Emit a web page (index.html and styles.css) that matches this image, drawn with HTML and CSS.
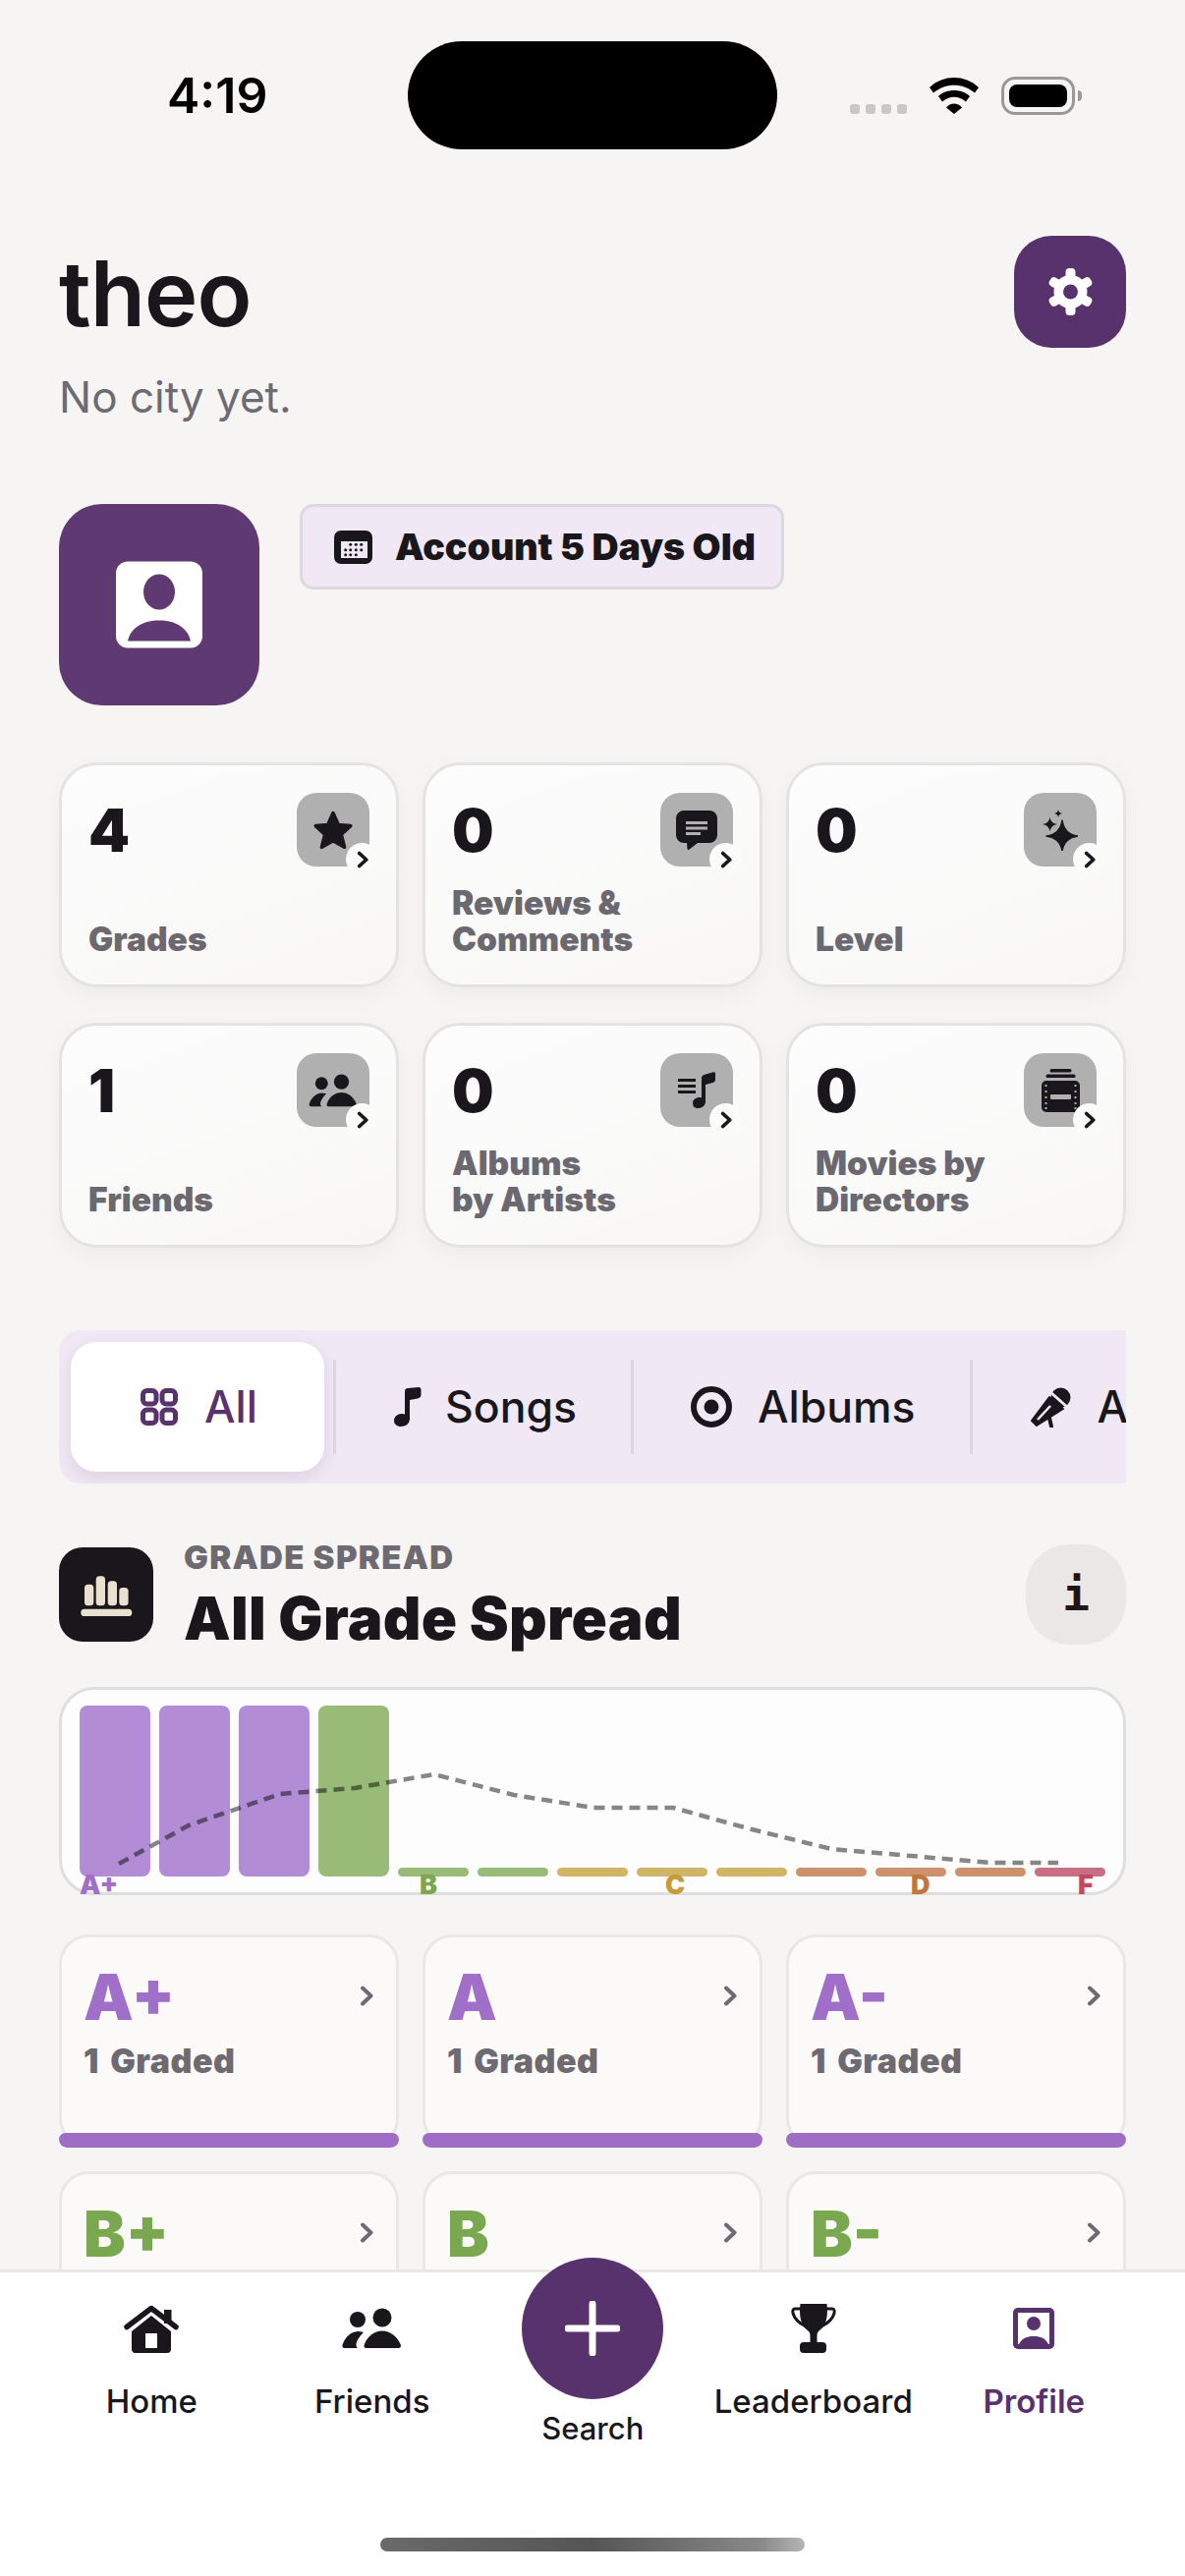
FILE: index.html
```html
<!DOCTYPE html>
<html lang="en">
<head>
    <meta charset="UTF-8">
    <title>Profile</title>
    <link rel="stylesheet" href="styles.css">
</head>
<body>
    <div class="content">
        <div class="status">
            <div class="time">4:19</div>
            <div class="island"></div>
            <div class="dots"><i></i><i></i><i></i><i></i></div>
            <svg class="wifi" viewBox="0 0 50 37">
                <path d="M0 10 C14 -3.300 36 -3.300 50 10 L46 15.500 C34 5 16 5 4 15.500Z"/>
                <path d="M9 19 C17 11 33 11 41 19 L37 24.500 C30 18 20 18 13 24.500Z"/>
                <path d="M17 30.500 C21 25 29 25 33 30.500 L25 37Z"/>
            </svg>
            <div class="battery"><div class="battery-fill"></div></div>
            <div class="battery-nub"></div>
        </div>

        <div class="head">
            <div class="head-text">
                <h1 class="name">theo</h1>
                <div class="city">No city yet.</div>
            </div>
            <div class="settings">
                <svg viewBox="0 0 48 48" width="49" height="48">
                    <g fill="#fff">
                        <circle cx="24" cy="24" r="17"/>
                        <rect x="19" y="0" width="10" height="12" rx="4"/>
                        <rect x="19" y="0" width="10" height="12" rx="4" transform="rotate(60 24 24)"/>
                        <rect x="19" y="0" width="10" height="12" rx="4" transform="rotate(120 24 24)"/>
                        <rect x="19" y="0" width="10" height="12" rx="4" transform="rotate(180 24 24)"/>
                        <rect x="19" y="0" width="10" height="12" rx="4" transform="rotate(240 24 24)"/>
                        <rect x="19" y="0" width="10" height="12" rx="4" transform="rotate(300 24 24)"/>
                    </g>
                    <circle cx="24" cy="24" r="7.500" fill="#58326d"/>
                </svg>
            </div>
        </div>

        <div class="account">
            <div class="avatar">
                <svg viewBox="0 0 88 88" width="88" height="89">
                    <rect width="88" height="88" rx="12" fill="#fff"/>
                    <ellipse cx="44" cy="31" rx="16" ry="18" fill="#5f3a72"/>
                    <path d="M12 81 C15 67 28 60 44 60 S73 67 76 81Z" fill="#5f3a72"/>
                </svg>
            </div>
            <div class="badge">
                <svg viewBox="0 0 39 34" width="39" height="34">
                    <rect width="39" height="34" rx="7" fill="#19171c"/>
                    <rect x="7" y="11" width="27" height="17" fill="#f0e8f4"/>
                    <g fill="#19171c">
                        <circle cx="16.700" cy="14.300" r="1.500"/><circle cx="22.300" cy="14.300" r="1.500"/><circle cx="27.700" cy="14.300" r="1.500"/>
                        <circle cx="11.700" cy="19.700" r="1.500"/><circle cx="16.700" cy="19.700" r="1.500"/><circle cx="22.300" cy="19.700" r="1.500"/><circle cx="27.700" cy="19.700" r="1.500"/>
                        <circle cx="11.700" cy="24.700" r="1.500"/><circle cx="16.700" cy="24.700" r="1.500"/><circle cx="22.300" cy="24.700" r="1.500"/>
                    </g>
                </svg>
                <span>Account 5 Days Old</span>
            </div>
        </div>

        <div class="stats">
            <div class="stat">
                <div class="stat-top">
                    <div class="stat-num">4</div>
                    <div class="stat-icon">
                        <svg viewBox="0 0 44 44" width="44" height="42"><polygon points="22,4 27.500,16.500 40.500,17.500 30.500,26.500 34,40 22,33 10,40 13.500,26.500 3.500,17.500 16.500,16.500" fill="#19171c" stroke="#19171c" stroke-width="4" stroke-linejoin="round"/></svg>
                        <div class="stat-go"><svg viewBox="0 0 12 16" width="13" height="18"><path d="M2.500 2 L9 8 L2.500 14" fill="none" stroke="#19171c" stroke-width="3.400" stroke-linecap="round" stroke-linejoin="round"/></svg></div>
                    </div>
                </div>
                <div class="stat-label">Grades</div>
            </div>
            <div class="stat">
                <div class="stat-top">
                    <div class="stat-num">0</div>
                    <div class="stat-icon">
                        <svg viewBox="0 0 42 40" width="42" height="40">
                            <path d="M8 0 H34 A8 8 0 0 1 42 8 V25 A8 8 0 0 1 34 33 H22 L13 40 C12 40 11.500 39.500 11.500 38.500 L11 33 H8 A8 8 0 0 1 0 25 V8 A8 8 0 0 1 8 0Z" fill="#19171c"/>
                            <g fill="#b1b0b1"><rect x="10" y="11" width="22" height="3"/><rect x="10" y="16.500" width="22" height="3"/><rect x="10" y="22" width="15" height="3"/></g>
                        </svg>
                        <div class="stat-go"><svg viewBox="0 0 12 16" width="13" height="18"><path d="M2.500 2 L9 8 L2.500 14" fill="none" stroke="#19171c" stroke-width="3.400" stroke-linecap="round" stroke-linejoin="round"/></svg></div>
                    </div>
                </div>
                <div class="stat-label">Reviews &amp;<br>Comments</div>
            </div>
            <div class="stat">
                <div class="stat-top">
                    <div class="stat-num">0</div>
                    <div class="stat-icon">
                        <svg viewBox="0 0 36 42" width="36" height="42" fill="#19171c">
                            <path d="M20 11 Q22 25 36 27 Q22 29 20 42 Q18 29 4 27 Q18 25 20 11Z" stroke="#19171c" stroke-width="1.500" stroke-linejoin="round"/>
                            <path d="M7.500 8 Q8.500 14 15 15 Q8.500 16 7.500 22 Q6.500 16 0 15 Q6.500 14 7.500 8Z"/>
                            <path d="M16 0 Q16.500 3.500 20 4 Q16.500 4.500 16 8 Q15.500 4.500 12 4 Q15.500 3.500 16 0Z"/>
                        </svg>
                        <div class="stat-go"><svg viewBox="0 0 12 16" width="13" height="18"><path d="M2.500 2 L9 8 L2.500 14" fill="none" stroke="#19171c" stroke-width="3.400" stroke-linecap="round" stroke-linejoin="round"/></svg></div>
                    </div>
                </div>
                <div class="stat-label">Level</div>
            </div>
            <div class="stat">
                <div class="stat-top">
                    <div class="stat-num">1</div>
                    <div class="stat-icon">
                        <svg viewBox="0 0 61 42" width="50" height="34" fill="#19171c">
                            <circle cx="41" cy="10" r="9.500"/><circle cx="16" cy="12" r="8"/>
                            <path d="M25 41 C22.500 41 22 39 23 37 C26 29 33 23.500 41 23.500 C49 23.500 56 29 59.500 37 C60.500 39 60 41 57 41Z"/>
                            <path d="M3 41 C.5 41 0 39 .8 37 C3.500 29.500 9 24.500 16 24 C18 24 20 24.300 22 25 C19 28 15 33 14.500 37 C14.300 39 15 40 16 41Z"/>
                        </svg>
                        <div class="stat-go"><svg viewBox="0 0 12 16" width="13" height="18"><path d="M2.500 2 L9 8 L2.500 14" fill="none" stroke="#19171c" stroke-width="3.400" stroke-linecap="round" stroke-linejoin="round"/></svg></div>
                    </div>
                </div>
                <div class="stat-label">Friends</div>
            </div>
            <div class="stat">
                <div class="stat-top">
                    <div class="stat-num">0</div>
                    <div class="stat-icon">
                        <svg viewBox="0 0 38 37" width="38" height="37" fill="#19171c">
                            <rect y="7" width="18" height="3"/><rect y="13" width="18" height="3"/><rect y="19" width="18" height="3"/>
                            <path d="M24 6 C24 4.500 25 3.500 26.500 3 L36 .2 C37.300 0 38 .7 38 2 V8 C38 9.500 37 10.500 35.500 11 L28 13 V30 C28 34 25 37 20.500 37 C17 37 15 35 15 32 C15 28.500 18 26 22 26 C22.800 26 23.500 26.100 24 26.300Z"/>
                        </svg>
                        <div class="stat-go"><svg viewBox="0 0 12 16" width="13" height="18"><path d="M2.500 2 L9 8 L2.500 14" fill="none" stroke="#19171c" stroke-width="3.400" stroke-linecap="round" stroke-linejoin="round"/></svg></div>
                    </div>
                </div>
                <div class="stat-label">Albums<br>by Artists</div>
            </div>
            <div class="stat">
                <div class="stat-top">
                    <div class="stat-num">0</div>
                    <div class="stat-icon">
                        <svg viewBox="0 0 39 44" width="39" height="44">
                            <g fill="#19171c">
                                <rect x="8.500" width="22" height="3.500" rx="1.500"/><rect x="4.500" y="5.500" width="30" height="3.500" rx="1.500"/><rect y="12" width="39" height="32" rx="5"/>
                            </g>
                            <g fill="#b1b0b1">
                                <rect x="9" y="26" width="21" height="5" rx="1"/>
                                <rect x="3.500" y="16" width="2" height="2"/><rect x="3.500" y="22" width="2" height="2"/><rect x="3.500" y="28" width="2" height="2"/><rect x="3.500" y="34" width="2" height="2"/><rect x="3.500" y="39" width="2" height="2"/>
                                <rect x="33.500" y="16" width="2" height="2"/><rect x="33.500" y="22" width="2" height="2"/><rect x="33.500" y="28" width="2" height="2"/><rect x="33.500" y="34" width="2" height="2"/><rect x="33.500" y="39" width="2" height="2"/>
                            </g>
                        </svg>
                        <div class="stat-go"><svg viewBox="0 0 12 16" width="13" height="18"><path d="M2.500 2 L9 8 L2.500 14" fill="none" stroke="#19171c" stroke-width="3.400" stroke-linecap="round" stroke-linejoin="round"/></svg></div>
                    </div>
                </div>
                <div class="stat-label">Movies by<br>Directors</div>
            </div>
        </div>

        <div class="tabs">
            <div class="tab tab-active">
                <svg viewBox="0 0 38 38" width="38" height="38" fill="none" stroke="#58326d" stroke-width="5">
                    <rect x="2.500" y="2.500" width="13.500" height="13.500" rx="4"/><rect x="22" y="2.500" width="13.500" height="13.500" rx="4"/>
                    <rect x="2.500" y="22" width="13.500" height="13.500" rx="4"/><rect x="22" y="22" width="13.500" height="13.500" rx="4"/>
                </svg>
                <span>All</span>
            </div>
            <div class="tab-line"></div>
            <div class="tab tab-songs">
                <svg viewBox="0 0 28 40" width="28" height="40" fill="#19171c"><path d="M11 4 C11 2 12.500 1 14 1 L25 0 C27 0 27.500 1 27.500 3 V8 C27.500 10 26 11 24 11.500 L16 13 V32 C16 37 12 40 7 40 C3 40 0 37.500 0 34 C0 30 3.500 27 8 27 C9 27 10.500 27.300 11 27.600Z"/></svg>
                <span>Songs</span>
            </div>
            <div class="tab-line"></div>
            <div class="tab tab-albums">
                <svg viewBox="0 0 42 42" width="42" height="42"><circle cx="21" cy="21" r="18" fill="none" stroke="#19171c" stroke-width="6"/><circle cx="21" cy="21" r="7.500" fill="#19171c"/></svg>
                <span>Albums</span>
            </div>
            <div class="tab-line"></div>
            <div class="tab tab-artists">
                <svg viewBox="0 0 42 41" width="42" height="41">
                    <circle cx="31.500" cy="10.500" r="10" fill="#19171c"/>
                    <path d="M21 5 L38 20" stroke="#f0e8f4" stroke-width="3"/>
                    <path d="M20 10 L34 22 L7 39 L2 34Z" fill="#19171c" stroke="#19171c" stroke-width="2" stroke-linejoin="round"/>
                    <path d="M8 33 L21 19" stroke="#f0e8f4" stroke-width="2.500"/>
                    <path d="M19 27 L22 40" stroke="#19171c" stroke-width="4" stroke-linecap="round"/>
                </svg>
                <span>Artists</span>
            </div>
        </div>

        <div class="spread-head">
            <div class="spread-icon">
                <svg viewBox="0 0 95 95" width="95" height="95" fill="#e8e1d0">
                    <rect x="25" y="36.700" width="9.300" height="21.600" rx="3.500"/><rect x="36.700" y="28.300" width="9.300" height="30" rx="3.500"/>
                    <rect x="48.700" y="33.300" width="9.300" height="25" rx="3.500"/><rect x="60.300" y="40" width="9.300" height="18.300" rx="3.500"/>
                    <rect x="21.300" y="61.700" width="52" height="7.300" rx="3.600"/>
                </svg>
            </div>
            <div class="spread-titles">
                <div class="spread-kicker">GRADE SPREAD</div>
                <div class="spread-title">All Grade Spread</div>
            </div>
            <div class="info">i</div>
        </div>

        <div class="chart">
            <div class="bars">
                <div class="bar c-a" style="height:174px"></div>
                <div class="bar c-a" style="height:174px"></div>
                <div class="bar c-a" style="height:174px"></div>
                <div class="bar c-b" style="height:174px"></div>
                <div class="bar c-b" style="height:9px"></div>
                <div class="bar c-b" style="height:9px"></div>
                <div class="bar c-c" style="height:9px"></div>
                <div class="bar c-c" style="height:9px"></div>
                <div class="bar c-c" style="height:9px"></div>
                <div class="bar c-d" style="height:9px"></div>
                <div class="bar c-d" style="height:9px"></div>
                <div class="bar c-d" style="height:9px"></div>
                <div class="bar c-f" style="height:9px"></div>
            </div>
            <svg class="trend" viewBox="0 0 1086 211" width="1086" height="211">
                <polyline points="61,180 132,141 225,109 301,103 382,89 463,110 544,123 625,123 705,145 786,165 867,172 948,179 1017,179" fill="none" stroke="#000" stroke-opacity=".47" stroke-width="4.500" stroke-dasharray="11 7" stroke-linejoin="round"/>
            </svg>
            <span class="chart-label t-a" style="left:18px">A+</span>
            <span class="chart-label t-b" style="left:364px">B</span>
            <span class="chart-label t-c" style="left:614px">C</span>
            <span class="chart-label t-d" style="left:864px">D</span>
            <span class="chart-label t-f" style="left:1034px">F</span>
        </div>

        <div class="grades">
            <div class="grade">
                <div class="grade-body">
                    <div class="grade-top"><span class="grade-name t-a2">A+</span><svg class="grade-go" viewBox="0 0 15 21" width="15" height="21"><path d="M3 2.500 L11.500 10.500 L3 18.500" fill="none" stroke="#6d6a72" stroke-width="4" stroke-linecap="round" stroke-linejoin="round"/></svg></div>
                    <div class="grade-count">1 Graded</div>
                </div>
                <div class="grade-bar"></div>
            </div>
            <div class="grade">
                <div class="grade-body">
                    <div class="grade-top"><span class="grade-name t-a2">A</span><svg class="grade-go" viewBox="0 0 15 21" width="15" height="21"><path d="M3 2.500 L11.500 10.500 L3 18.500" fill="none" stroke="#6d6a72" stroke-width="4" stroke-linecap="round" stroke-linejoin="round"/></svg></div>
                    <div class="grade-count">1 Graded</div>
                </div>
                <div class="grade-bar"></div>
            </div>
            <div class="grade">
                <div class="grade-body">
                    <div class="grade-top"><span class="grade-name t-a2">A-</span><svg class="grade-go" viewBox="0 0 15 21" width="15" height="21"><path d="M3 2.500 L11.500 10.500 L3 18.500" fill="none" stroke="#6d6a72" stroke-width="4" stroke-linecap="round" stroke-linejoin="round"/></svg></div>
                    <div class="grade-count">1 Graded</div>
                </div>
                <div class="grade-bar"></div>
            </div>
            <div class="grade">
                <div class="grade-body">
                    <div class="grade-top"><span class="grade-name t-b2">B+</span><svg class="grade-go" viewBox="0 0 15 21" width="15" height="21"><path d="M3 2.500 L11.500 10.500 L3 18.500" fill="none" stroke="#6d6a72" stroke-width="4" stroke-linecap="round" stroke-linejoin="round"/></svg></div>
                </div>
            </div>
            <div class="grade">
                <div class="grade-body">
                    <div class="grade-top"><span class="grade-name t-b2">B</span><svg class="grade-go" viewBox="0 0 15 21" width="15" height="21"><path d="M3 2.500 L11.500 10.500 L3 18.500" fill="none" stroke="#6d6a72" stroke-width="4" stroke-linecap="round" stroke-linejoin="round"/></svg></div>
                </div>
            </div>
            <div class="grade">
                <div class="grade-body">
                    <div class="grade-top"><span class="grade-name t-b2">B-</span><svg class="grade-go" viewBox="0 0 15 21" width="15" height="21"><path d="M3 2.500 L11.500 10.500 L3 18.500" fill="none" stroke="#6d6a72" stroke-width="4" stroke-linecap="round" stroke-linejoin="round"/></svg></div>
                </div>
            </div>
        </div>
    </div>

    <div class="nav">
        <div class="nav-row">
            <div class="nav-item">
                <div class="nav-icon">
                    <svg viewBox="0 0 56 49" width="56" height="49" fill="#19171c">
                        <path d="M3 22.500 L28 3.500 L53 22.500" fill="none" stroke="#19171c" stroke-width="5.500" stroke-linecap="round" stroke-linejoin="round"/>
                        <rect x="41" y="5" width="7.500" height="14"/>
                        <path fill-rule="evenodd" d="M28 11 L48 27 V45 A4 4 0 0 1 44 49 H12 A4 4 0 0 1 8 45 V27Z M22 29 V44 H34 V29Z"/>
                    </svg>
                </div>
                <span>Home</span>
            </div>
            <div class="nav-item">
                <div class="nav-icon">
                    <svg viewBox="0 0 61 42" width="61" height="42" fill="#19171c">
                        <circle cx="41" cy="10" r="9.500"/><circle cx="16" cy="12" r="8"/>
                        <path d="M25 41 C22.500 41 22 39 23 37 C26 29 33 23.500 41 23.500 C49 23.500 56 29 59.500 37 C60.500 39 60 41 57 41Z"/>
                        <path d="M3 41 C.5 41 0 39 .8 37 C3.500 29.500 9 24.500 16 24 C18 24 20 24.300 22 25 C19 28 15 33 14.500 37 C14.300 39 15 40 16 41Z"/>
                    </svg>
                </div>
                <span>Friends</span>
            </div>
            <div class="nav-item nav-search">
                <div class="plus">
                    <svg viewBox="0 0 56 56" width="56" height="56"><path d="M28 3 V53 M3 28 H53" stroke="#fff" stroke-width="7" stroke-linecap="round"/></svg>
                </div>
                <span>Search</span>
            </div>
            <div class="nav-item">
                <div class="nav-icon">
                    <svg viewBox="0 0 46 50" width="46" height="50" fill="#19171c">
                        <path d="M9.500 0 H36.500 C38 12 36 22 29 27 C27 28.500 26.500 30 26.500 33 V40 H19.500 V33 C19.500 30 19 28.500 17 27 C10 22 8 12 9.500 0Z"/>
                        <rect x="9" y="39" width="27" height="11" rx="4"/>
                        <path d="M10 5 H4 C2 5 1.500 7 2 9.500 C3.500 15 9 20 15 23" fill="none" stroke="#19171c" stroke-width="3"/>
                        <path d="M36 5 H42 C44 5 44.500 7 44 9.500 C42.500 15 37 20 31 23" fill="none" stroke="#19171c" stroke-width="3"/>
                    </svg>
                </div>
                <span>Leaderboard</span>
            </div>
            <div class="nav-item nav-active">
                <div class="nav-icon">
                    <svg viewBox="0 0 42 42" width="42" height="42">
                        <rect width="42" height="42" rx="5" fill="#58326d"/>
                        <rect x="5" y="5" width="32" height="32" fill="#fff"/>
                        <circle cx="21" cy="16" r="7" fill="#58326d"/>
                        <path d="M6 37 C9 31 14 29 21 29 S33 31 36 37Z" fill="#58326d"/>
                    </svg>
                </div>
                <span>Profile</span>
            </div>
        </div>
        <div class="home-bar"></div>
    </div>
</body>
</html>
```

FILE: styles.css
```css
* {
    box-sizing: border-box;
}
html, body {
    margin: 0;
    padding: 0;
}
body {
    width: 1206px;
    height: 2622px;
    overflow: hidden;
    display: flex;
    flex-direction: column;
    background-color: #f6f5f3;
    color: #19171c;
    font-family: Inter, "Liberation Sans", sans-serif;
}

.content {
    flex: 1;
    min-height: 0;
    overflow: hidden;
}

/* status bar */
.status {
    height: 110px;
    margin-top: 42px;
    display: flex;
    align-items: center;
    color: #000;
}
.time {
    width: 245px;
    margin-left: 170px;
    font-size: 50px;
    font-weight: 600;
}
.island {
    width: 376px;
    height: 110px;
    border-radius: 55px;
    background-color: #000;
}
.dots {
    display: flex;
    gap: 6px;
    margin-left: 74px;
    margin-top: 28px;
}
.dots i {
    display: block;
    width: 10px;
    height: 10px;
    border-radius: 3px;
    background-color: #c9c8c6;
}
.wifi {
    width: 50px;
    height: 37px;
    margin-left: 23px;
    fill: #000;
}
.battery {
    width: 75px;
    height: 39px;
    margin-left: 23px;
    padding: 5px;
    border: 3px solid #999;
    border-radius: 14px;
}
.battery-fill {
    height: 100%;
    border-radius: 8px;
    background-color: #000;
}
.battery-nub {
    width: 4px;
    height: 11px;
    margin-left: 3px;
    border-radius: 0 4px 4px 0;
    background-color: #999;
}

/* name */
.head {
    display: flex;
    justify-content: space-between;
    align-items: flex-start;
    padding: 0 60px;
    margin-top: 88px;
}
.head-text {
    padding-top: 5px;
}
.name {
    margin: 0;
    font-size: 92px;
    line-height: 108px;
    font-weight: 600;
    letter-spacing: -1px;
}
.city {
    margin-top: 24px;
    font-size: 44px;
    line-height: 54px;
    color: #6d6a72;
}
.settings {
    width: 114px;
    height: 114px;
    border-radius: 38px;
    background-color: #58326d;
    display: flex;
    align-items: center;
    justify-content: center;
}

.account {
    display: flex;
    align-items: flex-start;
    gap: 41px;
    padding: 0 60px;
    margin-top: 82px;
}
.avatar {
    width: 204px;
    height: 205px;
    border-radius: 44px;
    background-color: #5f3a72;
    display: flex;
    align-items: center;
    justify-content: center;
}
.badge {
    display: flex;
    align-items: center;
    gap: 23px;
    height: 87px;
    padding: 0 26px 0 32px;
    border: 3px solid #ddd8e0;
    border-radius: 14px;
    background-color: #f0e8f4;
    font-size: 37.500px;
    font-weight: 900;
}

/* stat cards */
.stats {
    display: grid;
    grid-template-columns: repeat(3, 346px);
    column-gap: 24px;
    row-gap: 36px;
    padding: 0 60px;
    margin-top: 58px;
}
.stat {
    height: 229px;
    padding: 28px 27px 0 27px;
    display: flex;
    flex-direction: column;
    border: 3px solid #e4e3e1;
    border-radius: 38px;
    background: linear-gradient(160deg, #fdfdfd, #f8f7f6);
    box-shadow: 0 8px 22px rgba(0, 0, 0, .04);
}
.stat-top {
    display: flex;
    justify-content: space-between;
    align-items: flex-start;
}
.stat-num {
    margin-top: 1px;
    font-size: 60px;
    line-height: 75px;
    font-weight: 900;
}
.stat-icon {
    position: relative;
    width: 74px;
    height: 75px;
    border-radius: 20px;
    background-color: #b1b0b1;
    display: flex;
    align-items: center;
    justify-content: center;
}
.stat-go {
    position: absolute;
    right: -9px;
    bottom: -9px;
    width: 33px;
    height: 33px;
    padding-left: 2px;
    border-radius: 50%;
    background-color: #fbfbfa;
    display: flex;
    align-items: center;
    justify-content: center;
}
.stat-label {
    margin-top: auto;
    margin-bottom: 27px;
    font-size: 33.500px;
    line-height: 37px;
    font-weight: 900;
    color: #6b6870;
}

/* tabs */
.tabs {
    display: flex;
    align-items: center;
    height: 156px;
    margin: 84px 60px 0;
    padding-left: 12px;
    overflow: hidden;
    border-radius: 22px 0 0 22px;
    background-color: #f0e8f4;
}
.tab {
    flex: none;
    display: flex;
    align-items: center;
    gap: 26px;
    font-size: 44.500px;
    font-weight: 500;
}
.tab-active {
    width: 258px;
    height: 132px;
    justify-content: center;
    gap: 27px;
    padding-left: 3px;
    margin-right: 9px;
    border-radius: 26px;
    background-color: #fff;
    color: #58326d;
    box-shadow: 0 6px 16px rgba(88, 50, 109, .12);
}
.tab-line {
    flex: none;
    width: 3px;
    height: 96px;
    background-color: #dcd6e0;
}
.tab-songs {
    gap: 24px;
    margin: 0 55px 0 59px;
}
.tab-albums {
    margin: 0 56px 0 58px;
}
.tab-artists {
    margin-left: 58px;
}

/* grade spread */
.spread-head {
    display: flex;
    align-items: center;
    padding: 0 60px;
    margin-top: 62px;
}
.spread-icon {
    flex: none;
    width: 96px;
    height: 96px;
    border-radius: 24px;
    background-color: #19171c;
    display: flex;
    align-items: center;
    justify-content: center;
}
.spread-titles {
    flex: 1;
    margin: -12px 0 -10px 31px;
}
.spread-kicker {
    font-size: 33px;
    line-height: 36px;
    font-weight: 900;
    letter-spacing: 1.300px;
    color: #6d6a72;
}
.spread-title {
    margin-top: 13px;
    font-size: 60px;
    line-height: 62px;
    font-weight: 900;
    letter-spacing: .3px;
}
.info {
    flex: none;
    width: 102px;
    height: 102px;
    border-radius: 44px;
    background-color: #e9e8e6;
    display: flex;
    align-items: center;
    justify-content: center;
    font-family: "DejaVu Sans Mono", monospace;
    font-size: 46px;
    font-weight: 700;
}

.chart {
    position: relative;
    height: 212px;
    margin: 43px 60px 0;
    border: 3px solid #dedede;
    border-radius: 36px;
    background-color: #fdfdfd;
}
.bars {
    display: flex;
    align-items: flex-end;
    gap: 9px;
    height: 190px;
    padding-left: 18px;
}
.bar {
    width: 72px;
    border-radius: 8px;
}
.c-a { background-color: #b28cd4; }
.c-b { background-color: #98bb78; }
.c-c { background-color: #d0b468; }
.c-d { background-color: #cd916c; }
.c-f { background-color: #c66f85; }
.trend {
    position: absolute;
    left: -3px;
    top: -3px;
}
.chart-label {
    position: absolute;
    bottom: -3px;
    font-size: 27px;
    line-height: 21px;
    font-weight: 900;
}
.t-a { color: #9f6fc9; }
.t-b { color: #7aa850; }
.t-c { color: #c79b3a; }
.t-d { color: #c07640; }
.t-f { color: #c04a66; }

/* grade cards */
.grades {
    display: grid;
    grid-template-columns: repeat(3, 346px);
    column-gap: 24px;
    row-gap: 24px;
    padding: 0 60px;
    margin-top: 40px;
}
.grade {
    height: 217px;
    display: flex;
    flex-direction: column;
    border: 3px solid #e9e8e5;
    border-radius: 30px;
    background-color: #fbfaf8;
}
.grade-body {
    flex: 1;
    padding: 21px 22px 0 22px;
}
.grade-top {
    display: flex;
    justify-content: space-between;
    align-items: center;
}
.grade-name {
    font-size: 64px;
    line-height: 80px;
    font-weight: 900;
}
.t-a2 { color: #a06fc9; }
.t-b2 { color: #7aa850; }
.grade-go {
    margin-top: -4px;
}
.grade-count {
    margin-top: 5px;
    font-size: 34px;
    line-height: 40px;
    font-weight: 900;
    letter-spacing: .5px;
    word-spacing: 4px;
    color: #6d6a72;
}
.grade-bar {
    height: 15px;
    margin: 0 -3px -3px;
    border-radius: 7px 7px 9px 9px;
    background-color: #9f6cc6;
}

/* bottom nav */
.nav {
    position: relative;
    flex: none;
    height: 312px;
    display: flex;
    flex-direction: column;
    border-top: 3px solid #e8e8e8;
    background-color: #fff;
}
.nav-row {
    display: grid;
    grid-template-columns: repeat(5, 224.500px);
    padding-left: 42px;
}
.nav-item {
    display: flex;
    flex-direction: column;
    align-items: center;
    padding-top: 30px;
    font-size: 33px;
    line-height: 40px;
    font-weight: 500;
}
.nav-icon {
    height: 54px;
    display: flex;
    align-items: center;
    justify-content: center;
    margin-bottom: 27px;
}
.nav-search {
    padding-top: 0;
    margin-top: -15px;
    font-size: 31px;
}
.plus {
    width: 144px;
    height: 144px;
    margin-bottom: 10px;
    border-radius: 50%;
    background-color: #58326d;
    display: flex;
    align-items: center;
    justify-content: center;
}
.nav-active {
    color: #58326d;
    font-weight: 600;
}
.home-bar {
    width: 432px;
    height: 14px;
    margin: auto auto 25px;
    border-radius: 7px;
    background: linear-gradient(90deg, #6a6a6a, #555 50%, #8a8a8a 90%, #b5b5b5);
}
```
